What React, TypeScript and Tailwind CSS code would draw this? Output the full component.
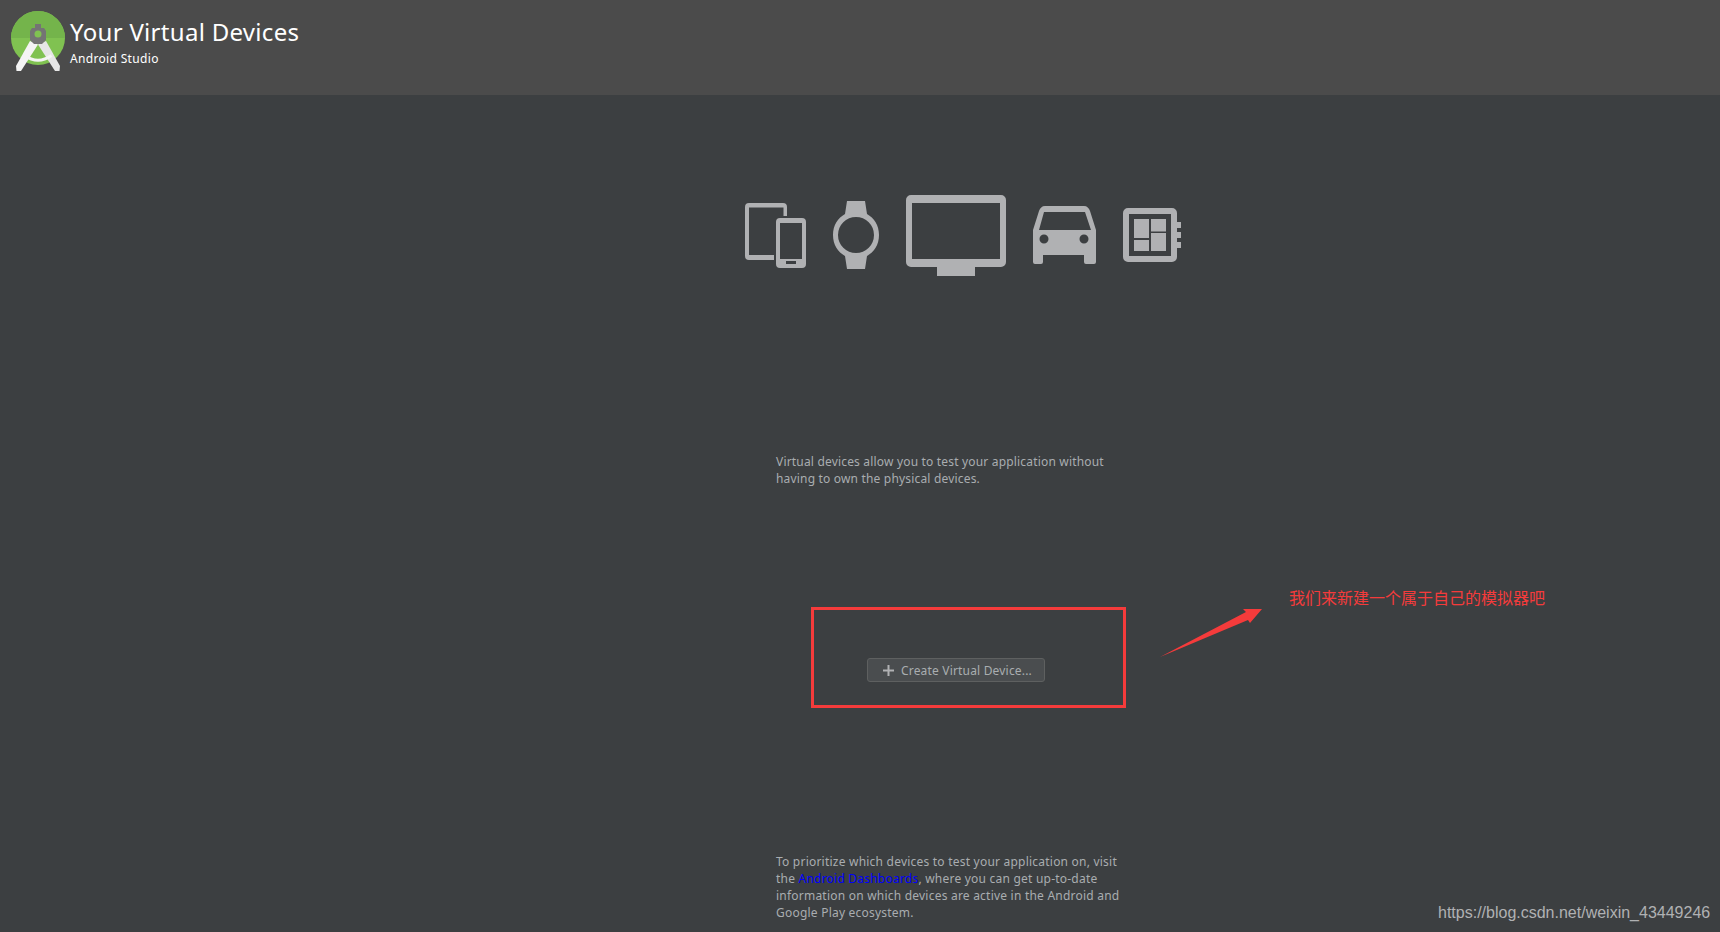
const font = "font-['Noto_Sans','Liberation_Sans',sans-serif]";

function Logo() {
  return (
    <svg viewBox="0 0 64 66" className="absolute left-[10px] top-[9px] w-[64px] h-[66px]">
      <circle cx="28" cy="29" r="27" fill="#80c251" />
      <path d="M1 29a27 27 0 0 1 54 0z" fill="#74b44b" />
      <path d="M20 32 L28 35.500 L11 62 L6.500 62 L6 57 Z" fill="#f4f4f4" />
      <path d="M36 32 L28 35.500 L45 62 L49.500 62 L50 57 Z" fill="#e6e6e6" />
      <path d="M14.500 46.500 Q28 56 41.500 46.500" stroke="#f4f4f4" strokeWidth="3" fill="none" />
      <path d="M25 15h6v4h3l2 3v9l-4 4h-8l-4-4v-9l2-3h3z" fill="#747474" />
      <circle cx="28" cy="25" r="3.500" fill="#80c251" />
    </svg>
  );
}

function DevicesIcon() {
  return (
    <svg width="61" height="65" viewBox="0 0 61 65" fill="#b0b1b3">
      <path d="M4 0h34a4 4 0 0 1 4 4v9h-3.500V4.500H4v47.500h25v5H4a4 4 0 0 1-4-4V4a4 4 0 0 1 4-4z" />
      <path fillRule="evenodd" d="M35 15h22a4 4 0 0 1 4 4v42a4 4 0 0 1-4 4H35a4 4 0 0 1-4-4V19a4 4 0 0 1 4-4zM35 20v36h22V20zM41 58v3h10v-3z" />
    </svg>
  );
}

function WatchIcon() {
  return (
    <svg width="46" height="68" viewBox="0 0 46 68" fill="#b0b1b3">
      <path fillRule="evenodd" d="M14 0h18l2 13c7 4 12 11 12 21s-5 17-12 21l-2 13H14l-2-13C5 51 0 44 0 34s5-17 12-21zM23 16a18 18 0 1 0 0 36 18 18 0 0 0 0-36z" />
    </svg>
  );
}

function TvIcon() {
  return (
    <svg width="100" height="81" viewBox="0 0 100 81" fill="#b0b1b3" className="self-start">
      <path fillRule="evenodd" d="M5 0h90a5 5 0 0 1 5 5v62a5 5 0 0 1-5 5H69v9H31v-9H5a5 5 0 0 1-5-5V5a5 5 0 0 1 5-5zM6 8v56h88V8z" />
    </svg>
  );
}

function CarIcon() {
  return (
    <svg width="63" height="58" viewBox="0 0 63 58" fill="#b0b1b3">
      <path fillRule="evenodd" d="M12 0h39c3 0 5 2 6 5l6 19v32a2 2 0 0 1-2 2H53a2 2 0 0 1-2-2v-7H10v7a2 2 0 0 1-2 2H2a2 2 0 0 1-2-2V24L6 5c1-3 3-5 6-5zM11 6 6 24h52L52 6zM11 28.500a4.500 4.500 0 1 0 0 9 4.500 4.500 0 0 0 0-9zM51 28.500a4.500 4.500 0 1 0 0 9 4.500 4.500 0 0 0 0-9z" />
    </svg>
  );
}

function ThingsIcon() {
  return (
    <svg width="58" height="54" viewBox="0 0 58 54" fill="#b0b1b3">
      <path fillRule="evenodd" d="M5 0h44a5 5 0 0 1 5 5v44a5 5 0 0 1-5 5H5a5 5 0 0 1-5-5V5a5 5 0 0 1 5-5zM6 6v42h42V6z" />
      <path d="M54 14h4v6h-4zM54 24h4v6h-4zM54 34h4v6h-4z" />
      <path d="M11 11h15v19H11zM28 11h15v12.500H28zM28 25h15v18H28zM11 32h15v11H11z" />
    </svg>
  );
}

export default function App() {
  return (
    <div className={`relative h-[932px] w-[1720px] overflow-hidden bg-[#3c3f41] ${font}`}>
      <header className="relative h-[95px] bg-[#4b4b4b] pl-[70px] pt-[14px] text-white">
        <Logo />
        <h1 className="text-[24px] leading-[36px] tracking-[0.3px]">Your Virtual Devices</h1>
        <p className="mt-px text-[12px] leading-[16px] tracking-[0.33px]">Android Studio</p>
      </header>

      <main className="pl-[745px] text-[12px] leading-[17px] tracking-[0.18px] text-[#a9adb0]">
        <div className="mt-[100px] flex h-[80px] items-center gap-[27px]">
          <DevicesIcon />
          <WatchIcon />
          <TvIcon />
          <CarIcon />
          <ThingsIcon />
        </div>

        <p className="ml-[31px] mt-[178px] w-[360px]">
          Virtual devices allow you to test your application without
          <br />
          having to own the physical devices.
        </p>

        <button className="ml-[122px] mt-[171px] flex h-[24px] w-[178px] items-center justify-center gap-[7px] rounded-[3px] border border-[#5e6060] bg-[#4a4d4f] pl-[3px] text-[12px] text-[#a9adb0]">
          <svg width="11" height="11" viewBox="0 0 11 11" fill="#b0b1b3">
            <path d="M4.500 0h2v4.500H11v2H6.500V11h-2V6.500H0v-2h4.500z" />
          </svg>
          Create Virtual Device...
        </button>

        <p className="ml-[31px] mt-[171px] w-[360px] tracking-[0.22px]">
          To prioritize which devices to test your application on, visit
          <br />
          the <a className="text-[#0000ff]">Android Dashboards</a>, where you can get up-to-date
          <br />
          information on which devices are active in the Android and
          <br />
          Google Play ecosystem.
        </p>
      </main>

      {/* annotations on top of the screenshot */}
      <div className="absolute left-[811px] top-[607px] h-[101px] w-[315px] border-[3px] border-[#f53b3b]" />
      <svg className="absolute left-[1155px] top-[605px]" width="112" height="56" viewBox="0 0 112 56">
        <path d="M5 52 L91 7 L88 4 L107 4 L95 18 L93 15 Z" fill="#f53b3b" />
      </svg>
      <div className="absolute left-[1289px] top-[585px] font-['Noto_Sans_CJK_SC',sans-serif] text-[16px] leading-[24px] text-[#f53b3b]">
        我们来新建一个属于自己的模拟器吧
      </div>
      <div className="absolute left-[1438px] top-[903px] font-['Liberation_Sans',sans-serif] text-[16px] leading-[20px] text-[#b0b1b3]">
        https://blog.csdn.net/weixin_43449246
      </div>
    </div>
  );
}
